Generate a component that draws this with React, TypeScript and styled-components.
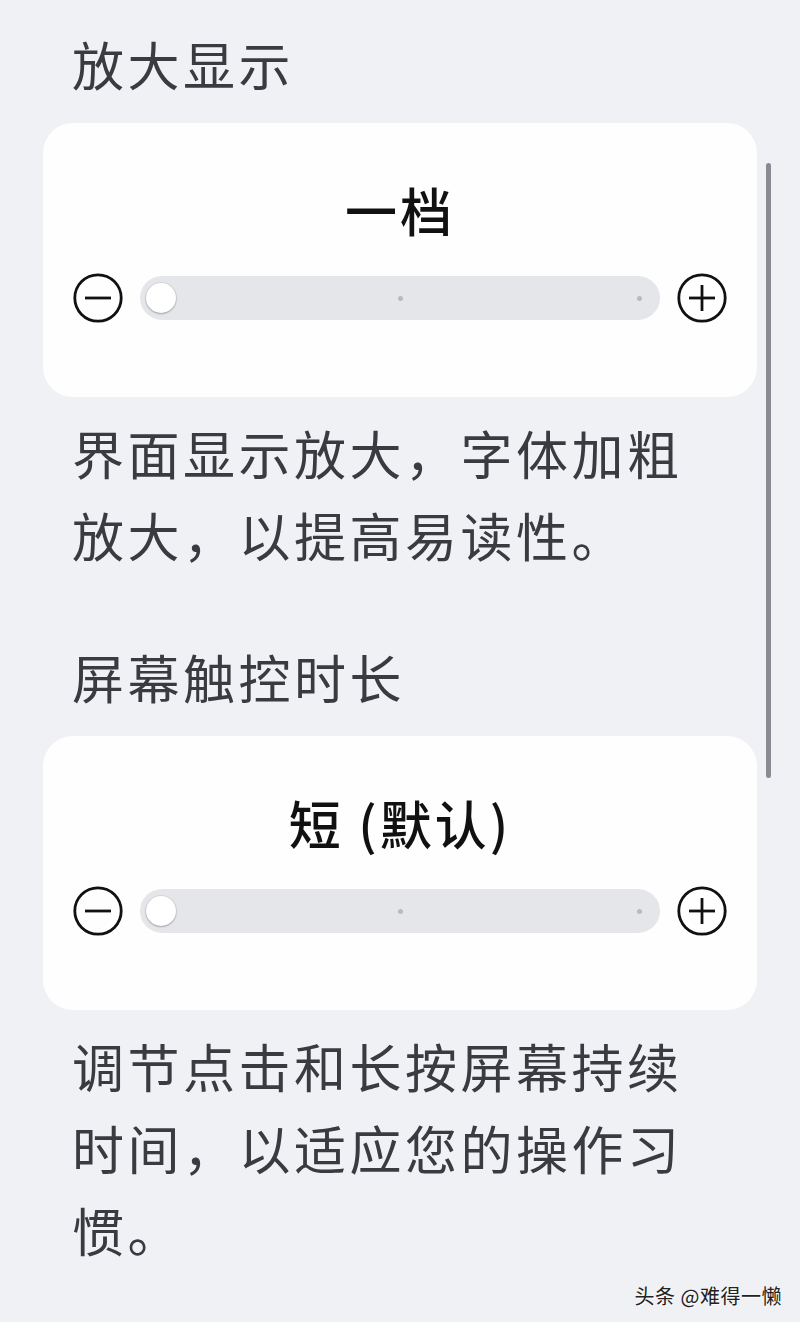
import styled, { createGlobalStyle } from "styled-components";

const GlobalStyle = createGlobalStyle`
  html, body {
    margin: 0;
    padding: 0;
    background: #f0f1f5;
  }
  body {
    font-family: "Noto Sans CJK SC", "Noto Sans", sans-serif;
  }
`;

interface Setting {
  title: string;
  level: string;
  description: string;
}

const settings: Setting[] = [
  {
    title: "放大显示",
    level: "一档",
    description: "界面显示放大，字体加粗放大，以提高易读性。",
  },
  {
    title: "屏幕触控时长",
    level: "短 (默认)",
    description: "调节点击和长按屏幕持续时间，以适应您的操作习惯。",
  },
];

const MinusIcon = () => (
  <svg width="50" height="50" viewBox="0 0 50 50">
    <circle cx="25" cy="25" r="23.2" fill="none" stroke="#111" strokeWidth="2.8" />
    <line x1="12" y1="25" x2="38" y2="25" stroke="#111" strokeWidth="2.8" />
  </svg>
);

const PlusIcon = () => (
  <svg width="50" height="50" viewBox="0 0 50 50">
    <circle cx="25" cy="25" r="23.2" fill="none" stroke="#111" strokeWidth="2.8" />
    <line x1="12" y1="25" x2="38" y2="25" stroke="#111" strokeWidth="2.8" />
    <line x1="25" y1="12" x2="25" y2="38" stroke="#111" strokeWidth="2.8" />
  </svg>
);

const App = () => {
  return (
    <>
      <GlobalStyle />
      <Page>
        {settings.map((s) => (
          <Section key={s.title}>
            <Heading>{s.title}</Heading>
            <Card>
              <Level>{s.level}</Level>
              <SliderRow>
                <StepButton aria-label="减小">
                  <MinusIcon />
                </StepButton>
                <Track>
                  <Thumb />
                  <Dot />
                  <Dot />
                </Track>
                <StepButton aria-label="增大">
                  <PlusIcon />
                </StepButton>
              </SliderRow>
            </Card>
            <Description>{s.description}</Description>
          </Section>
        ))}
        <ScrollBar />
        <Watermark>头条 @难得一懒</Watermark>
      </Page>
    </>
  );
};

export default App;

const Page = styled.div`
  position: relative;
  box-sizing: border-box;
  min-height: 1322px;
  padding: 36px 43px 0;
  display: flex;
  flex-direction: column;
  gap: 73px;
`;

const Section = styled.section`
  display: flex;
  flex-direction: column;
`;

const Heading = styled.h2`
  margin: 0 0 31px 29px;
  font-size: 52px;
  line-height: 56px;
  font-weight: 400;
  letter-spacing: 3.5px;
  color: #3a3a41;
`;

const Card = styled.div`
  box-sizing: border-box;
  height: 274px;
  padding-top: 59px;
  background: #fefefe;
  border-radius: 30px;
  display: flex;
  flex-direction: column;
  align-items: center;
  gap: 35px;
`;

const Level = styled.div`
  font-size: 52px;
  line-height: 56px;
  font-weight: 500;
  letter-spacing: 3px;
  color: #111;
`;

const SliderRow = styled.div`
  align-self: stretch;
  padding: 0 30px;
  display: flex;
  align-items: center;
  gap: 17px;
`;

const StepButton = styled.button`
  flex: none;
  width: 50px;
  height: 50px;
  padding: 0;
  border: none;
  background: none;
  display: flex;
  cursor: pointer;
`;

const Track = styled.div`
  flex: 1;
  height: 44px;
  border-radius: 22px;
  background: #e5e6ea;
  padding: 0 6px 0 6px;
  display: flex;
  align-items: center;
  justify-content: space-between;
`;

const Thumb = styled.div`
  width: 30px;
  height: 30px;
  border-radius: 50%;
  background: #ffffff;
  box-shadow: 0 1px 2px rgba(0, 0, 0, 0.25), 0 0 0 1px rgba(0, 0, 0, 0.06);
`;

const Dot = styled.div`
  width: 5px;
  height: 5px;
  border-radius: 50%;
  background: #b9bac0;
  margin-right: 12px;
`;

const Description = styled.p`
  margin: 15px 0 0 29px;
  width: 640px;
  font-size: 52px;
  line-height: 82px;
  letter-spacing: 3.5px;
  color: #3a3a41;
`;

const ScrollBar = styled.div`
  position: absolute;
  left: 766px;
  top: 163px;
  width: 5px;
  height: 615px;
  border-radius: 3px;
  background: #8a8a93;
`;

const Watermark = styled.div`
  position: absolute;
  right: 18px;
  bottom: 12px;
  font-size: 20px;
  letter-spacing: 0.5px;
  color: #222;
  text-shadow: 1px 1px 1px rgba(255, 255, 255, 0.9);
`;
